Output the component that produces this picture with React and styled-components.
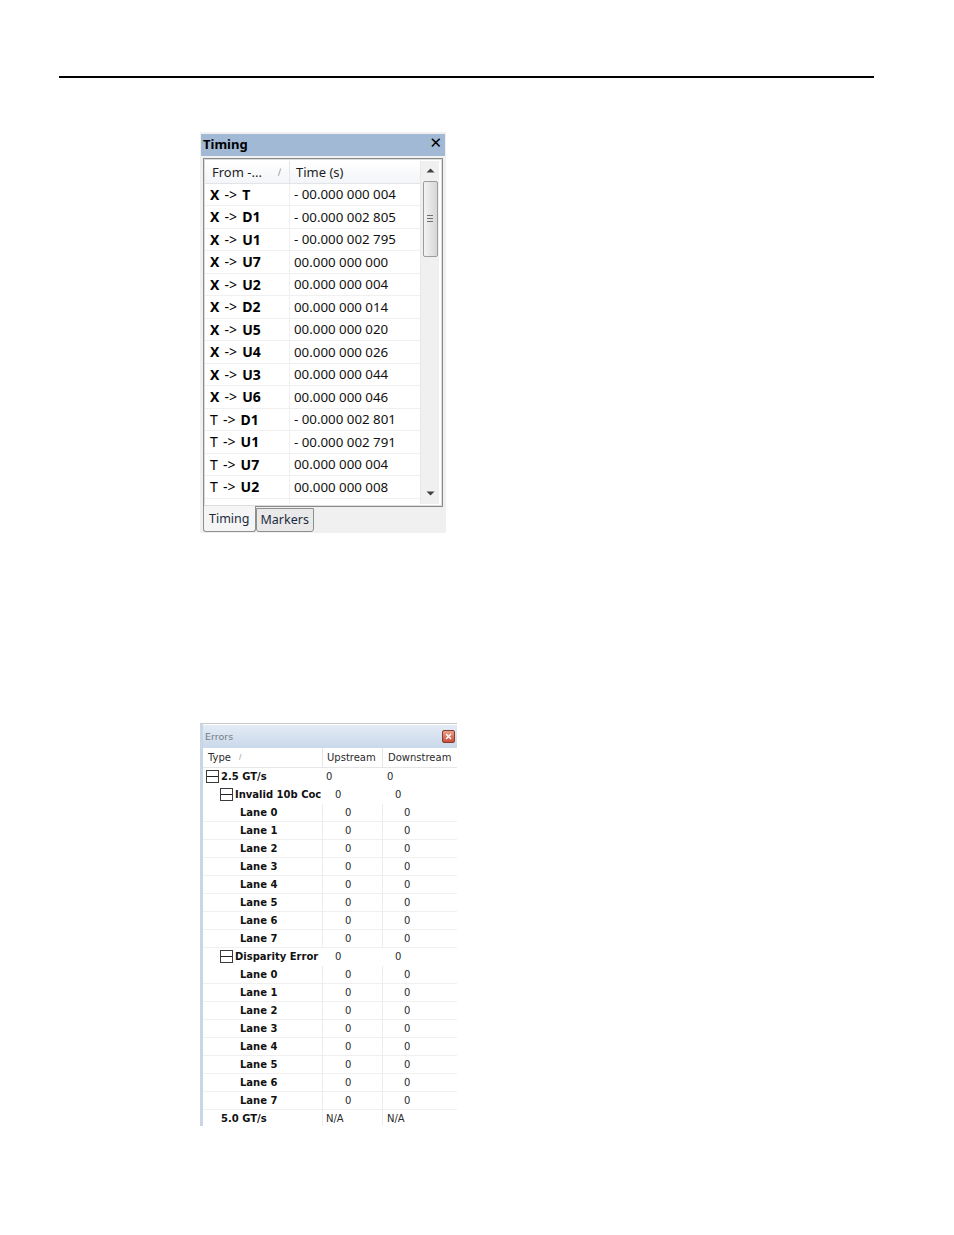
import React from "react";
import styled, { createGlobalStyle } from "styled-components";

const GlobalStyle = createGlobalStyle`
  html, body {
    margin: 0;
    padding: 0;
    background: #ffffff;
  }
  body {
    font-family: "Noto Sans", "DejaVu Sans", sans-serif;
  }
`;

const Page = styled.div`
  width: 954px;
  height: 1235px;
  padding-top: 76px;
  box-sizing: border-box;
  overflow: hidden;
`;

const Rule = styled.div`
  margin-left: 59px;
  width: 815px;
  height: 1.5px;
  background: #000;
`;

/* ---------- Timing panel ---------- */

const TimingPanel = styled.div`
  margin: 54px 0 0 200px;
  width: 246px;
  height: 401px;
  background: #f0f0f0;
  padding-top: 2px;
  box-sizing: border-box;
  display: flex;
  flex-direction: column;
`;

const TitleBar = styled.div`
  margin: 0 1px;
  height: 22px;
  background: #a1b9d4;
  display: flex;
  align-items: center;
  justify-content: space-between;
  padding: 0 3px 2px 2px;
  box-sizing: border-box;
  font-family: "Noto Sans", sans-serif;
  font-weight: 700;
  font-size: 13px;
  color: #000;
`;

const CloseX = styled.span`
  font-size: 15px;
  font-weight: 700;
  line-height: 1;
  font-family: "DejaVu Sans", sans-serif;
`;

const ListBox = styled.div`
  margin: 2px 3px 0 3px;
  height: 349px;
  border: 1px solid #8a8a8a;
  box-shadow: inset 0 0 0 1px #dcdcdc, inset -1px -1px 0 2px #fff;
  background: #fff;
  box-sizing: border-box;
  padding: 2px 2px 2px 1px;
  display: flex;
  overflow: hidden;
`;

const Table = styled.div`
  flex: 1;
  display: flex;
  flex-direction: column;
  overflow: hidden;
`;

const HeaderRow = styled.div`
  display: grid;
  grid-template-columns: 85px 1fr;
  height: 22px;
  flex-shrink: 0;
  background: linear-gradient(#ffffff, #f3f5f8);
  border-bottom: 1px solid #e2e4e8;
  font-size: 13px;
  color: #1e1e1e;
`;

const HeaderCell = styled.div`
  display: flex;
  align-items: center;
  padding-left: ${(p) => p.$pad || 6}px;
  border-right: ${(p) => (p.$divider ? "1px solid #e3e5e9" : "none")};
  position: relative;
`;

const SortMark = styled.span`
  position: absolute;
  right: 8px;
  top: 4px;
  font-size: 9px;
  color: #8a8a8a;
`;

const Row = styled.div`
  display: grid;
  grid-template-columns: 85px 1fr;
  height: 22.5px;
  flex-shrink: 0;
  border-bottom: 1px solid #f0f0f0;
  box-sizing: border-box;
  font-size: 13.3px;
  color: #111;
`;

const Cell = styled.div`
  display: flex;
  align-items: center;
  padding-left: ${(p) => p.$pad || 4}px;
  border-right: ${(p) => (p.$divider ? "1px solid #f0f0f0" : "none")};
  white-space: pre;
`;

const Label = styled.span`
  font-size: 14px;
  word-spacing: 1.5px;
  color: #000;
`;

const Part = styled.span`
  font-weight: ${(p) => (p.$bold ? 700 : 400)};
`;

const Scrollbar = styled.div`
  width: 18px;
  margin-right: 1px;
  background: #f0f0f0;
  border-left: 1px solid #e8e8e8;
  display: flex;
  flex-direction: column;
  align-items: center;
`;

const Arrow = styled.div`
  height: 20px;
  display: flex;
  align-items: center;
  justify-content: center;
  flex-shrink: 0;
`;

const Thumb = styled.div`
  width: 15px;
  height: 76px;
  box-sizing: border-box;
  border: 1px solid #9c9c9c;
  border-radius: 2px;
  background: linear-gradient(90deg, #f3f3f3, #e2e2e2 60%, #d6d6d6);
  display: flex;
  flex-direction: column;
  align-items: center;
  justify-content: center;
  gap: 2px;
`;

const Grip = styled.div`
  width: 6px;
  height: 1px;
  background: #6f6f6f;
`;

const Spacer = styled.div`
  flex: 1;
`;

const TabRow = styled.div`
  display: flex;
  align-items: flex-start;
  margin-left: 3px;
  margin-top: -1px;
`;

const Tab = styled.div`
  height: ${(p) => (p.$active ? 26 : 24)}px;
  margin-top: ${(p) => (p.$active ? 0 : 2)}px;
  padding: 0 ${(p) => (p.$active ? 5 : 4)}px;
  box-sizing: border-box;
  border: 1px solid #8e8f8f;
  border-top: ${(p) => (p.$active ? "none" : "1px solid #8e8f8f")};
  border-radius: 0 0 3px 3px;
  background: ${(p) => (p.$active ? "#f5f5f5" : "#e9e9e9")};
  font-size: 12.5px;
  color: #1c2c40;
  display: flex;
  align-items: center;
`;

/* ---------- Errors panel ---------- */

const ErrorsPanel = styled.div`
  margin: 190px 0 0 200px;
  width: 257px;
  height: 403px;
  border-top: 1px solid #c8c8c8;
  border-left: 3px solid #c9d6e6;
  box-sizing: border-box;
  overflow: hidden;
  font-family: "DejaVu Sans", sans-serif;
  font-size: 10px;
`;

const ErrTitle = styled.div`
  height: 23px;
  margin-top: 1px;
  background: linear-gradient(#e3ebf5, #cad8ea);
  display: flex;
  align-items: center;
  justify-content: space-between;
  padding: 0 2px 0 2px;
  color: #767b83;
  font-size: 9.5px;
`;

const RedClose = styled.div`
  width: 13px;
  height: 13px;
  box-sizing: border-box;
  border: 1px solid #8b3a2b;
  border-radius: 2px;
  background: linear-gradient(#e9a08d, #c9503a);
  display: flex;
  align-items: center;
  justify-content: center;
`;

const ErrGrid = styled.div`
  display: grid;
  grid-template-columns: 120px 60px 74px;
`;

const ErrHead = styled.div`
  height: 19px;
  display: flex;
  align-items: center;
  padding-left: ${(p) => p.$pad}px;
  background: #fff;
  border-bottom: 1px solid #e6e6e6;
  border-right: ${(p) => (p.$divider ? "1px solid #e6e6e6" : "none")};
  color: #2b2b2b;
  position: relative;
`;

const ErrSort = styled.span`
  margin-left: 8px;
  font-size: 7px;
  color: #888;
`;

const ErrCell = styled.div`
  height: 18px;
  box-sizing: border-box;
  display: flex;
  align-items: center;
  padding-left: ${(p) => p.$pad}px;
  border-bottom: 1px solid ${(p) => (p.$lines ? "#f0f0f0" : "#fff")};
  border-right: ${(p) => (p.$divider ? "1px solid #ececec" : "none")};
  font-weight: ${(p) => (p.$bold ? 700 : 400)};
  color: ${(p) => (p.$bold ? "#111" : "#2a2a2a")};
  white-space: nowrap;
  overflow: hidden;
`;

const TreeBox = styled.span`
  width: 13px;
  height: 13px;
  box-sizing: border-box;
  border: 1px solid #3a3a3a;
  margin-right: 2px;
  display: inline-flex;
  align-items: center;
  justify-content: center;
  flex-shrink: 0;
  &::after {
    content: "";
    width: 11px;
    height: 1px;
    background: #222;
  }
`;

const timingRows = [
  ["X", "T", true, true, "- 00.000 000 004"],
  ["X", "D1", true, true, "- 00.000 002 805"],
  ["X", "U1", true, true, "- 00.000 002 795"],
  ["X", "U7", true, true, "00.000 000 000"],
  ["X", "U2", true, true, "00.000 000 004"],
  ["X", "D2", true, true, "00.000 000 014"],
  ["X", "U5", true, true, "00.000 000 020"],
  ["X", "U4", true, true, "00.000 000 026"],
  ["X", "U3", true, true, "00.000 000 044"],
  ["X", "U6", true, true, "00.000 000 046"],
  ["T", "D1", false, true, "- 00.000 002 801"],
  ["T", "U1", false, true, "- 00.000 002 791"],
  ["T", "U7", false, true, "00.000 000 004"],
  ["T", "U2", false, true, "00.000 000 008"],
];

const lanes = [0, 1, 2, 3, 4, 5, 6, 7];

const errorRows = [
  { label: "2.5 GT/s", level: 0, box: true, up: "0", down: "0" },
  { label: "Invalid 10b Coc", level: 1, box: true, up: "0", down: "0" },
  ...lanes.map((n) => ({ label: `Lane ${n}`, level: 2, up: "0", down: "0" })),
  { label: "Disparity Error", level: 1, box: true, up: "0", down: "0" },
  ...lanes.map((n) => ({ label: `Lane ${n}`, level: 2, up: "0", down: "0" })),
  { label: "5.0 GT/s", level: 0, indent: 18, up: "N/A", down: "N/A" },
];

const typePad = { 0: 3, 1: 17, 2: 37 };
const upPad = { 0: 3, 1: 12, 2: 22 };
const downPad = { 0: 4, 1: 12, 2: 21 };

function Timing() {
  return (
    <TimingPanel>
      <TitleBar>
        <span>Timing</span>
        <CloseX>✕</CloseX>
      </TitleBar>
      <ListBox>
        <Table>
          <HeaderRow>
            <HeaderCell $divider $pad={7}>
              From -...
              <SortMark>∕</SortMark>
            </HeaderCell>
            <HeaderCell $pad={6}>Time (s)</HeaderCell>
          </HeaderRow>
          {timingRows.map(([a, b, boldA, boldB, t], i) => (
            <Row key={i}>
              <Cell $divider $pad={5}>
                <Label>
                  <Part $bold={boldA}>{a}</Part>
                  <Part> -&gt; </Part>
                  <Part $bold={boldB}>{b}</Part>
                </Label>
              </Cell>
              <Cell>{t}</Cell>
            </Row>
          ))}
          <Row>
            <Cell $divider />
            <Cell />
          </Row>
        </Table>
        <Scrollbar>
          <Arrow>
            <svg width="9" height="5" viewBox="0 0 9 5">
              <path d="M0.5 4.5 L4.5 0.5 L8.5 4.5 Z" fill="#404040" />
            </svg>
          </Arrow>
          <Thumb>
            <Grip />
            <Grip />
            <Grip />
          </Thumb>
          <Spacer />
          <Arrow>
            <svg width="9" height="5" viewBox="0 0 9 5">
              <path d="M0.5 0.5 L8.5 0.5 L4.5 4.5 Z" fill="#404040" />
            </svg>
          </Arrow>
        </Scrollbar>
      </ListBox>
      <TabRow>
        <Tab $active>Timing</Tab>
        <Tab>Markers</Tab>
      </TabRow>
    </TimingPanel>
  );
}

function Errors() {
  return (
    <ErrorsPanel>
      <ErrTitle>
        <span>Errors</span>
        <RedClose>
          <svg width="7" height="7" viewBox="0 0 7 7">
            <path d="M1 1 L6 6 M6 1 L1 6" stroke="#fff" strokeWidth="1.4" />
          </svg>
        </RedClose>
      </ErrTitle>
      <ErrGrid>
        <ErrHead $pad={5} $divider>
          Type<ErrSort>∕</ErrSort>
        </ErrHead>
        <ErrHead $pad={4} $divider>
          Upstream
        </ErrHead>
        <ErrHead $pad={5}>Downstream</ErrHead>
        {errorRows.map((r, i) => {
          const lines = r.level === 2 || r.indent;
          return (
            <React.Fragment key={i}>
              <ErrCell
                $bold
                $lines={lines}
                $divider={lines}
                $pad={r.indent || typePad[r.level]}
              >
                {r.box && <TreeBox />}
                {r.label}
              </ErrCell>
              <ErrCell $lines={lines} $divider={lines} $pad={upPad[r.level]}>
                {r.up}
              </ErrCell>
              <ErrCell $lines={lines} $pad={downPad[r.level]}>
                {r.down}
              </ErrCell>
            </React.Fragment>
          );
        })}
      </ErrGrid>
    </ErrorsPanel>
  );
}

export default function App() {
  return (
    <Page>
      <GlobalStyle />
      <Rule />
      <Timing />
      <Errors />
    </Page>
  );
}
